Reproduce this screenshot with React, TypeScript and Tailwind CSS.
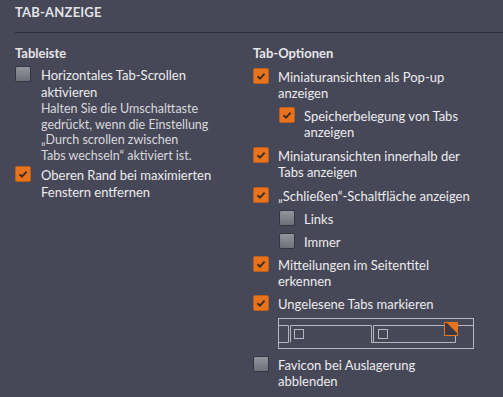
import type { ReactNode } from "react";

function Box({ checked }: { checked?: boolean }) {
  if (checked) {
    return (
      <div className="-mt-px flex h-4 w-4 shrink-0 items-center justify-center rounded-[2px] border border-[#b9601c] bg-[#e8731c]">
        <svg width="12" height="12" viewBox="0 0 12 12">
          <path d="M2.5 6.2 L5 8.6 L9.6 3.6" fill="none" stroke="#3d2c22" strokeWidth="1.9" />
        </svg>
      </div>
    );
  }
  return (
    <div className="-mt-px h-4 w-4 shrink-0 rounded-[2px] border border-[#34353f] bg-gradient-to-b from-[#93949c] to-[#6f707a]" />
  );
}

function Row({ checked, indent, children }: { checked?: boolean; indent?: boolean; children: ReactNode }) {
  return (
    <div className={indent ? "ml-[26px] flex items-start gap-[9px]" : "flex items-start gap-[9px]"}>
      <Box checked={checked} />
      <div className="text-[13px] leading-[16px] text-[#ececee]">{children}</div>
    </div>
  );
}

function TabStrip() {
  const line = "#b6b6be";
  return (
    <svg width="196" height="32" viewBox="0 0 196 32" className="ml-[25px] mt-[6px]">
      <rect x="0.5" y="0.5" width="195" height="30" fill="none" stroke={line} />
      {/* partial tab on the left */}
      <path d="M0 7.5 H10.5 V24.5 H0" fill="none" stroke={line} />
      {/* active tab */}
      <path d="M12.5 24.5 V7.5 H93.5 V24.5" fill="none" stroke={line} />
      <rect x="16.5" y="11.5" width="9" height="9" fill="none" stroke={line} />
      {/* second tab */}
      <path d="M95.5 24.5 V7.5 H195" fill="none" stroke={line} />
      <path d="M93.5 24.5 H177.5 V17" fill="none" stroke={line} />
      <rect x="100.5" y="11.5" width="9" height="9" fill="none" stroke={line} />
      <rect x="166.5" y="4.5" width="13" height="13" fill="#3a3a46" stroke="#e8731c" />
      <path d="M169 5 H179 V15 Z" fill="#e8731c" />
    </svg>
  );
}

export default function App() {
  return (
    <div className="h-[397px] w-[503px] overflow-hidden bg-[#474857] font-['Lato',sans-serif]">
      <div className="px-[15px] pt-[4px] text-[13px] font-bold leading-[16px] tracking-[0.2px] text-[#e2e2e6]">
        TAB-ANZEIGE
      </div>
      <div className="ml-[15px] mt-[12px] h-px bg-[#2c2d39]" />

      <div className="flex pt-[12px]">
        <div className="w-[253px] shrink-0 pl-[15px]">
          <div className="text-[13px] font-bold leading-[16px] text-[#e6e6ea]">Tableiste</div>
          <div className="mt-[6px] flex items-start gap-[10px]">
            <Box />
            <div className="text-[13px] leading-[17px] text-[#ececee]">
              Horizontales Tab-Scrollen
              <br />
              aktivieren
              <div className="text-[12.5px] leading-[15.5px] text-[#d8d8dc]">
                Halten Sie die Umschalttaste
                <br />
                gedrückt, wenn die Einstellung
                <br />
                „Durch scrollen zwischen
                <br />
                Tabs wechseln“ aktiviert ist.
              </div>
            </div>
          </div>
          <div className="mt-[4px] flex items-start gap-[10px]">
            <Box checked />
            <div className="text-[13px] leading-[17px] text-[#ececee]">
              Oberen Rand bei maximierten
              <br />
              Fenstern entfernen
            </div>
          </div>
        </div>

        <div className="flex-1">
          <div className="text-[13px] font-bold leading-[16px] text-[#e6e6ea]">Tab-Optionen</div>
          <div className="mt-[8px] flex flex-col gap-[7px]">
            <Row checked>
              Miniaturansichten als Pop-up
              <br />
              anzeigen
            </Row>
            <Row checked indent>
              Speicherbelegung von Tabs
              <br />
              anzeigen
            </Row>
            <div className="mt-px">
              <Row checked>
                Miniaturansichten innerhalb der
                <br />
                Tabs anzeigen
              </Row>
            </div>
            <div className="mt-px">
              <Row checked>„Schließen“-Schaltfläche anzeigen</Row>
            </div>
            <Row indent>Links</Row>
            <Row indent>Immer</Row>
            <Row checked>
              Mitteilungen im Seitentitel
              <br />
              erkennen
            </Row>
            <div>
              <Row checked>Ungelesene Tabs markieren</Row>
              <TabStrip />
            </div>
            <Row>
              Favicon bei Auslagerung
              <br />
              abblenden
            </Row>
          </div>
        </div>
      </div>
    </div>
  );
}
